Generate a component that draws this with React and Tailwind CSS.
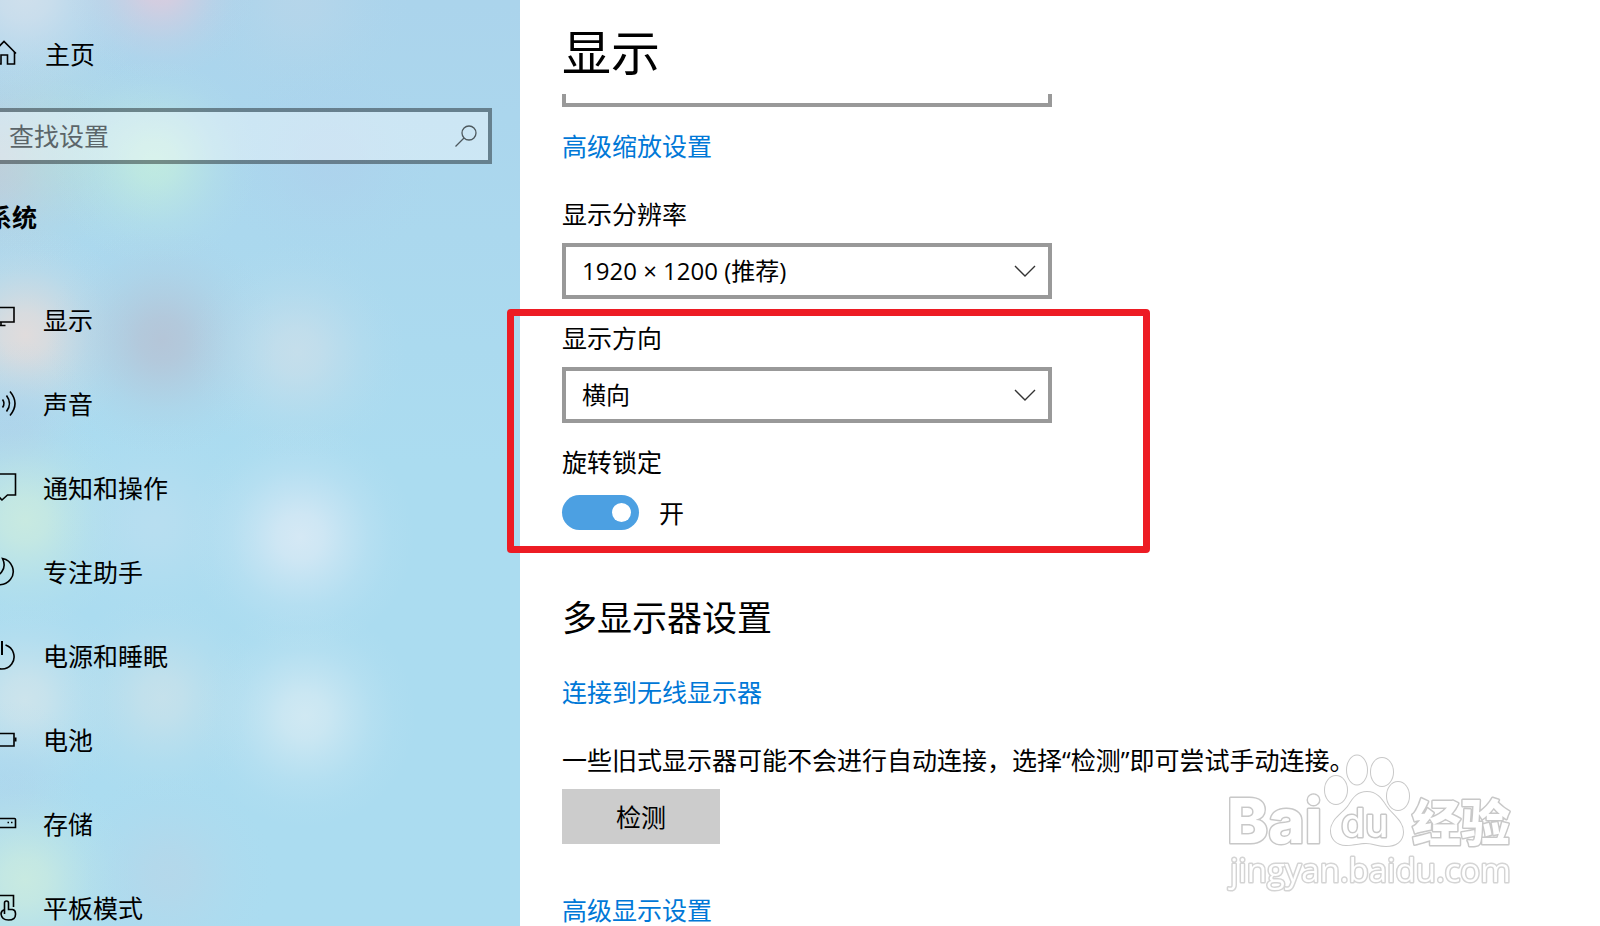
import React, { useState } from 'react';

const blobs = [
  { x: 25, y: -5, r: 125, color: '#d8e2ec', o: 0.8 },
  { x: 160, y: -15, r: 95, color: '#e2cbdc', o: 0.85 },
  { x: 300, y: 0, r: 110, color: '#bfd7e8', o: 0.5 },
  { x: 0, y: 165, r: 115, color: '#c9c6d2', o: 0.65 },
  { x: 60, y: 150, r: 120, color: '#b8e0d8', o: 0.5 },
  { x: 155, y: 162, r: 105, color: '#c6f0dc', o: 0.75 },
  { x: 330, y: 160, r: 110, color: '#aed0ec', o: 0.6 },
  { x: 25, y: 335, r: 110, color: '#e6dcda', o: 0.9 },
  { x: 162, y: 340, r: 115, color: '#b6c2d4', o: 0.85 },
  { x: 297, y: 352, r: 110, color: '#cbdfea', o: 0.8 },
  { x: 10, y: 430, r: 90, color: '#add1ea', o: 0.7 },
  { x: 25, y: 520, r: 110, color: '#cdecde', o: 0.85 },
  { x: 155, y: 525, r: 110, color: '#bddff0', o: 0.7 },
  { x: 300, y: 537, r: 115, color: '#d7e9f5', o: 0.95 },
  { x: 25, y: 700, r: 105, color: '#d2e5eb', o: 0.85 },
  { x: 162, y: 698, r: 105, color: '#cbe2ea', o: 0.8 },
  { x: 305, y: 716, r: 112, color: '#d4eaf3', o: 0.9 },
  { x: 10, y: 790, r: 90, color: '#add4ec', o: 0.6 },
  { x: 25, y: 880, r: 110, color: '#cdecde', o: 0.85 },
  { x: 168, y: 875, r: 105, color: '#b8d6e8', o: 0.7 },
];

const icons = {
  home: (
    <>
      <path d="M5 15.5 17 3.5 29 15.5" />
      <path d="M6.5 14v12h7.500v-9h6.500v9h7v-12" />
    </>
  ),
  display: (
    <>
      <path d="M.5 3.500h26.500v14.500H.500z" />
      <path d="M14 18v3.500M8 21.500h10.500" />
    </>
  ),
  sound: (
    <>
      <path d="M15.500 11.500q3 4 0 8" />
      <path d="M19.500 7.500q6 8 0 16" />
      <path d="M23 3.500q10 12 0 24" />
    </>
  ),
  notify: <path d="M.5 2h28v21h-8l-5.500 5-5-5h-9.500z" />,
  focus: <path d="M15.500 2.500A13.200 13.200 0 1 1 1 21C13 22 20.500 13 15.500 2.500z" />,
  power: (
    <>
      <path d="M18.500 5A12.300 12.300 0 1 1 11 5" />
      <path d="M15 1v14" strokeWidth="2" />
    </>
  ),
  battery: (
    <>
      <path d="M.5 9.500h26.500v12.500H.500z" />
      <path d="M28.500 13.500v4" strokeWidth="2" />
    </>
  ),
  storage: (
    <>
      <path d="M.5 10.500h27q1 0 1 1v8h-28z" />
      <path d="M20.500 14.500h1.500M24 14.500h1.500" />
    </>
  ),
  tablet: (
    <>
      <path d="M26.500 15V3.500H.5v22h12" />
      <path d="M17.500 22V11a2 2 0 0 1 4 0v6.500h4q3 .500 3 4v1c0 4-3 5.500-7 5.500-5 0-7-2-7.500-6 0-2 1-3.500 3.500-4.500" />
    </>
  ),
};

const navItems = [
  { icon: 'display', label: '显示' },
  { icon: 'sound', label: '声音' },
  { icon: 'notify', label: '通知和操作' },
  { icon: 'focus', label: '专注助手' },
  { icon: 'power', label: '电源和睡眠' },
  { icon: 'battery', label: '电池' },
  { icon: 'storage', label: '存储' },
  { icon: 'tablet', label: '平板模式' },
];

function NavIcon({ name }) {
  return (
    <svg viewBox="0 0 32 32" className="size-8 shrink-0" fill="none" stroke="black" strokeWidth="1.6" aria-hidden="true">
      {icons[name]}
    </svg>
  );
}

function Wallpaper() {
  return (
    <svg className="absolute inset-0 h-full w-full" aria-hidden="true">
      <defs>
        {blobs.map((b, i) => (
          <radialGradient key={i} id={`blob${i}`}>
            <stop offset="0" stopColor={b.color} stopOpacity={b.o} />
            <stop offset="0.2" stopColor={b.color} stopOpacity={b.o * 0.84} />
            <stop offset="0.4" stopColor={b.color} stopOpacity={b.o * 0.52} />
            <stop offset="0.6" stopColor={b.color} stopOpacity={b.o * 0.24} />
            <stop offset="0.8" stopColor={b.color} stopOpacity={b.o * 0.07} />
            <stop offset="1" stopColor={b.color} stopOpacity="0" />
          </radialGradient>
        ))}
      </defs>
      {blobs.map((b, i) => (
        <circle key={i} cx={b.x} cy={b.y} r={b.r} fill={`url(#blob${i})`} />
      ))}
    </svg>
  );
}

function Sidebar() {
  return (
    <aside className="relative w-[520px] shrink-0 overflow-hidden bg-linear-to-b from-[#abd4ec] to-[#abdcf0] to-50%">
      <Wallpaper />
      <div className="relative">
        <a href="#home" className="-ml-[13px] flex h-[108px] items-center gap-[26px]">
          <NavIcon name="home" />
          主页
        </a>
        <div className="mr-7 flex h-14 items-center border-4 border-l-0 border-black/40 bg-white/40 bg-clip-padding pr-[10px]">
          <input
            type="text"
            aria-label="查找设置"
            placeholder="查找设置"
            className="min-w-0 flex-1 bg-transparent pl-[9px] outline-none placeholder:text-[#5b6569]"
          />
          <svg viewBox="0 0 24 24" className="size-6" fill="none" stroke="#4d585d" strokeWidth="1.3" aria-hidden="true">
            <circle cx="15" cy="9" r="7" />
            <path d="M10 14 1.500 22.500" />
          </svg>
        </div>
        <h2 className="-ml-[13px] mt-[37px] leading-8 font-bold">系统</h2>
        <nav className="-ml-[13px] mt-[45px]">
          {navItems.map((item) => (
            <a key={item.label} href={`#${item.icon}`} className="flex h-[84px] items-center gap-6">
              <NavIcon name={item.icon} />
              {item.label}
            </a>
          ))}
        </nav>
      </div>
    </aside>
  );
}

function SelectField({ id, label, options }) {
  return (
    <div className="flex flex-col gap-[13px]">
      <label htmlFor={id}>{label}</label>
      <div className="relative w-[490px]">
        <select id={id} className="h-14 w-full appearance-none border-4 border-[#999] bg-white pl-4 text-2xl">
          {options.map((o) => (
            <option key={o}>{o}</option>
          ))}
        </select>
        <svg
          viewBox="0 0 22 12"
          className="pointer-events-none absolute top-[22px] right-4 h-3 w-[22px]"
          fill="none"
          stroke="#333"
          strokeWidth="1.4"
          aria-hidden="true"
        >
          <path d="M1 1l10 10L21 1" />
        </svg>
      </div>
    </div>
  );
}

function Toggle() {
  const [on, setOn] = useState(true);
  return (
    <div className="mt-4 flex h-[35px] items-center gap-5">
      <button
        role="switch"
        aria-checked={on}
        aria-labelledby="rotation-lock"
        onClick={() => setOn((v) => !v)}
        className={`flex h-[35px] w-[77px] items-center rounded-full px-2 ${on ? 'justify-end bg-[#4ca0e2]' : 'bg-[#999]'}`}
      >
        <span className="size-[19px] rounded-full bg-white" />
      </button>
      <span>{on ? '开' : '关'}</span>
    </div>
  );
}

function Watermark() {
  return (
    <svg
      viewBox="0 0 300 150"
      className="pointer-events-none absolute right-[80px] bottom-[26px] h-[150px] w-[300px]"
      fill="white"
      stroke="#c8c8c8"
      strokeWidth="3"
      strokeLinejoin="round"
    >
      <defs>
        <filter id="soften">
          <feGaussianBlur stdDeviation="0.7" />
        </filter>
      </defs>
      <g filter="url(#soften)" paintOrder="stroke">
        <g fontFamily='Inter, "Liberation Sans", sans-serif' fontWeight="800">
          <text x="7" y="93" fontSize="62">Bai</text>
          <g strokeWidth="2">
            <ellipse cx="116" cy="40" rx="11" ry="14" />
            <ellipse cx="137" cy="20" rx="10" ry="14.500" />
            <ellipse cx="162" cy="22" rx="11" ry="14" />
            <ellipse cx="178" cy="46" rx="11" ry="14" />
            <path d="M147 42c9 0 14 6 19 14 6 9 17 15 17 26 0 9-7 14-17 14-8 0-13-3-20-3s-12 2-20 2c-10 0-15-7-15-14 0-12 12-17 18-26 5-8 9-13 18-13z" />
          </g>
          <text x="121" y="87" fontSize="39" fontWeight="500">du</text>
        </g>
        <text x="192" y="91" fontSize="49" fontWeight="900" fontFamily='"Noto Sans CJK SC", sans-serif'>
          经验
        </text>
        <text x="10" y="132" fontSize="33" fontFamily='"Open Sans", "Noto Sans", sans-serif' stroke="#d4d4d4">
          jingyan.baidu.com
        </text>
      </g>
    </svg>
  );
}

export default function App() {
  return (
    <div className="relative flex h-screen overflow-hidden bg-white font-['Open_Sans','Noto_Sans_CJK_SC',sans-serif] text-[25px] leading-8 text-black">
      <Sidebar />
      <main className="min-w-0 flex-1 pt-5 pl-[42px]">
        <h1 className="text-[49px] leading-[64px]">显示</h1>

        {/* lower edge of the combo box scrolled under the title */}
        <div className="mt-[10px] h-[13px] w-[490px] border-4 border-t-0 border-[#999]" />
        <a href="#scaling" className="mt-[23px] block w-fit text-[#0078d7]">高级缩放设置</a>

        <div className="mt-9">
          <SelectField id="resolution" label="显示分辨率" options={['1920 × 1200 (推荐)']} />
        </div>

        <section className="relative mt-[23px] w-[490px]">
          <SelectField id="orientation" label="显示方向" options={['横向']} />
          <p id="rotation-lock" className="mt-[23px] mb-[17px]">旋转锁定</p>
          <Toggle />
          <div className="pointer-events-none absolute -top-[13px] -right-[98px] -bottom-[23px] -left-[55px] rounded border-[7px] border-[#ed1c24]" />
        </section>

        <h2 className="mt-[68px] text-[35px] leading-10">多显示器设置</h2>
        <a href="#wireless" className="mt-[38px] block w-fit text-[#0078d7]">连接到无线显示器</a>
        <p className="mt-9">一些旧式显示器可能不会进行自动连接，选择“检测”即可尝试手动连接。</p>
        <button className="mt-[13px] block h-[55px] w-[158px] bg-[#ccc]">检测</button>
        <a href="#advanced" className="mt-[50px] block w-fit text-[#0078d7]">高级显示设置</a>
      </main>
      <Watermark />
    </div>
  );
}
